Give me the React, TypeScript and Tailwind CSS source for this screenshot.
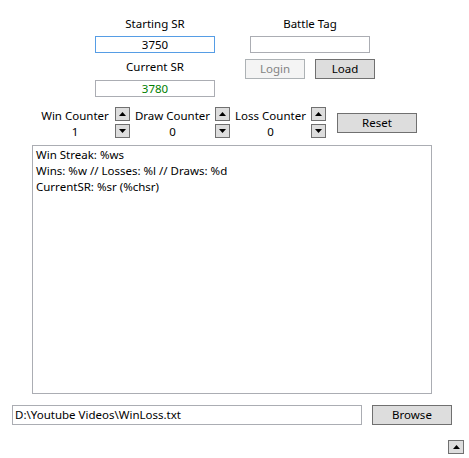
const Arrow = ({ down }: { down?: boolean }) => (
  <svg width="7" height="4" viewBox="0 0 7 4">
    {down ? <path d="M0 0H7L3.5 4Z" fill="#000" /> : <path d="M0 4H7L3.5 0Z" fill="#000" />}
  </svg>
);

function SpinButton({ down, className = "" }: { down?: boolean; className?: string }) {
  return (
    <div
      className={`flex h-[14px] w-[15px] items-center justify-center border border-[#707070] bg-[#dddddd] ${className}`}
    >
      <Arrow down={down} />
    </div>
  );
}

function Counter({ label, value, width }: { label: string; value: number; width: string }) {
  return (
    <div className="flex">
      <div className={`flex flex-col pt-[1px] text-center ${width}`}>
        <div className="h-[16px] leading-[16px]">{label}</div>
        <div className="h-[16px] leading-[16px]">{value}</div>
      </div>
      <div className="flex flex-col">
        <SpinButton />
        <SpinButton down className="mt-[3px]" />
      </div>
    </div>
  );
}

export default function App() {
  return (
    <div
      className="flex h-[458px] w-[469px] flex-col bg-white text-[11.5px] text-black"
      style={{ fontFamily: '"Noto Sans", sans-serif' }}
    >
      <div className="flex pl-[95px] pt-[15px]">
        <div className="flex w-[120px] flex-col">
          <div className="h-[16px] pt-[1px] text-center leading-[16px]">Starting SR</div>
          <div className="mt-[5px] h-[17px] border border-[#569de5] text-center leading-[15px]">3750</div>
          <div className="mt-[5px] h-[16px] pt-[1px] text-center leading-[16px]">Current SR</div>
          <div className="mt-[6px] h-[17px] border border-[#abadb3] text-center leading-[15px] text-[#008000]">
            3780
          </div>
        </div>
        <div className="ml-[30px] flex w-[130px] flex-col">
          <div className="h-[16px] pt-[1px] text-center leading-[16px]">Battle Tag</div>
          <div className="mx-[5px] mt-[5px] h-[17px] border border-[#abadb3]" />
          <div className="mt-[6px] flex gap-[10px]">
            <div className="flex h-[20px] w-[60px] items-center justify-center border border-[#adb2b5] bg-[#f4f4f4] text-[#838383]">
              Login
            </div>
            <div className="flex h-[20px] w-[60px] items-center justify-center border border-[#707070] bg-[#dddddd]">
              Load
            </div>
          </div>
        </div>
      </div>

      <div className="mt-[10px] flex pl-[35px]">
        <Counter label="Win Counter" value={1} width="w-[80px]" />
        <Counter label="Draw Counter" value={0} width="w-[85px]" />
        <Counter label="Loss Counter" value={0} width="w-[81px]" />
        <div className="ml-[11px] mt-[6px] flex h-[20px] w-[80px] items-center justify-center border border-[#707070] bg-[#dddddd]">
          Reset
        </div>
      </div>

      <div className="ml-[32px] mt-[5px] h-[249px] w-[400px] border border-[#abadb3] px-[3px] pt-[1px] leading-[16px]">
        <div>Win Streak: %ws</div>
        <div>Wins: %w // Losses: %l // Draws: %d</div>
        <div>CurrentSR: %sr (%chsr)</div>
      </div>

      <div className="mt-[11px] flex">
        <div className="ml-[12px] h-[20px] w-[350px] border border-[#abadb3] px-[2px] leading-[18px]">
          D:\Youtube Videos\WinLoss.txt
        </div>
        <div className="ml-[10px] flex h-[20px] w-[80px] items-center justify-center border border-[#707070] bg-[#dddddd]">
          Browse
        </div>
      </div>

      <div className="ml-[448px] mt-[15px] flex h-[14px] w-[16px] items-center justify-center border border-[#707070] bg-[#dddddd]">
        <Arrow />
      </div>
    </div>
  );
}
